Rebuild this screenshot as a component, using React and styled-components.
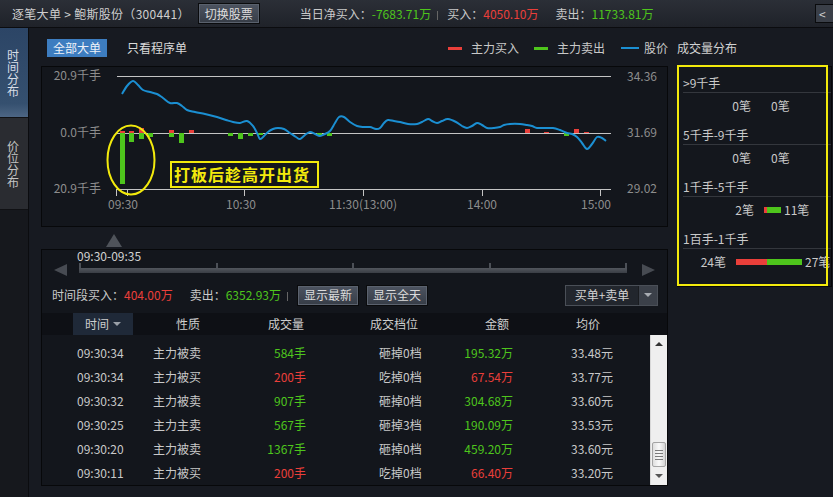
import React from 'react'
import styled, { createGlobalStyle } from 'styled-components'

const GREEN = '#4ec51c'
const RED = '#ea3f3a'
const BLUE = '#1b8fd2'
const YELLOW = '#f3ea0c'

const GlobalStyle = createGlobalStyle`
    html, body {
        margin: 0;
        padding: 0;
        background: #171a21;
    }
    body {
        font-family: "Noto Sans CJK SC", "Noto Sans", sans-serif;
        font-size: 12px;
        color: #c9c9c9;
    }
    * {
        box-sizing: border-box;
    }
`

const Frame = styled.div`
    width: 833px;
    height: 497px;
    display: flex;
    flex-direction: column;
    overflow: hidden;
    background: #171a21;
`

const TopBar = styled.div`
    height: 28px;
    flex-shrink: 0;
    display: flex;
    align-items: center;
    padding-left: 12px;
    background: linear-gradient(#2b2f37, #1f2229);
    border-bottom: 1px solid #0b0c0f;
    line-height: 16px;
    white-space: nowrap;
`

const Crumb = styled.span`
    color: #cfcfcf;
    letter-spacing: 0.3px;
`

const SwitchButton = styled.div`
    margin-left: 8px;
    height: 21px;
    padding: 0 6px;
    display: flex;
    align-items: center;
    color: #dedede;
    background: linear-gradient(#4d5461, #363c46);
    border: 1px solid #0a0b0d;
    box-shadow: inset 0 0 0 1px #5a616d;
`

const Stats = styled.div`
    margin-left: 40px;
    display: flex;
    align-items: center;
`

const Value = styled.span`
    color: ${p => (p.$tone === 'red' ? RED : GREEN)};
    margin-right: ${p => p.$gap || 0}px;
`

const Sep = styled.span`
    width: 1px;
    height: 9px;
    background: #666;
    margin: 3px 9px 0 6px;
`

const BackButton = styled.div`
    margin-left: auto;
    width: 18px;
    height: 19px;
    background: #3a3f48;
    border: 1px solid #0a0b0d;
    border-right: none;
    color: #cfcfcf;
    padding-left: 3px;
    line-height: 17px;
`

const Body = styled.div`
    flex: 1;
    display: flex;
`

const Sidebar = styled.div`
    width: 29px;
    flex-shrink: 0;
    display: flex;
    flex-direction: column;
    background: #16181d;
    border-right: 1px solid #0b0c0f;
`

const SideTab = styled.div`
    height: ${p => (p.$active ? 90 : 92)}px;
    display: flex;
    align-items: center;
    justify-content: center;
    padding-right: 3px;
    writing-mode: vertical-rl;
    text-orientation: upright;
    line-height: 12px;
    color: ${p => (p.$active ? '#d8dde6' : '#c4c4c4')};
    background: ${p => (p.$active
        ? 'linear-gradient(#2c4566, #35506f 85%, #4d6684)'
        : '#2a2c31')};
    border-bottom: 1px solid #101114;
`

const Main = styled.div`
    flex: 1;
    display: flex;
    align-items: flex-start;
    padding: 10px 0 0 12px;
`

const LeftColumn = styled.div`
    width: 627px;
    display: flex;
    flex-direction: column;
`

const FilterRow = styled.div`
    height: 20px;
    display: flex;
    align-items: center;
    padding-left: 6px;
    line-height: 16px;
`

const FilterTab = styled.div`
    height: 18px;
    display: flex;
    align-items: center;
    margin-right: 20px;
    color: ${p => (p.$active ? '#eef2f8' : '#dadada')};
    background: ${p => (p.$active ? '#3d7dc0' : 'transparent')};
    padding: ${p => (p.$active ? '0 6px' : '0')};
`

const Legend = styled.div`
    margin-left: auto;
    display: flex;
    align-items: center;
`

const LegendItem = styled.div`
    display: flex;
    align-items: center;
    margin-left: ${p => p.$gap}px;
`

const Swatch = styled.span`
    width: ${p => p.$w}px;
    height: ${p => p.$h}px;
    background: ${p => p.$color};
    margin-right: ${p => p.$mr}px;
`

const ChartPanel = styled.div`
    position: relative;
    margin-top: 8px;
    height: 161px;
    background: #13161c;
    border: 1px solid #07080a;
`

const Note = styled.div`
    position: absolute;
    left: 128px;
    top: 94px;
    width: 149px;
    height: 27px;
    border: 2px solid ${YELLOW};
    background: #13161c;
    color: ${YELLOW};
    font-size: 16px;
    font-weight: bold;
    line-height: 22px;
    padding-left: 2px;
    letter-spacing: 1px;
`

const MarkerRow = styled.div`
    height: 22px;
    padding-top: 7px;
    padding-left: 65px;
`

const Marker = styled.div`
    width: 0;
    height: 0;
    border-left: 8px solid transparent;
    border-right: 8px solid transparent;
    border-bottom: 13px solid #4f535a;
`

const LowerPanel = styled.div`
    height: 237px;
    background: #13161c;
    border: 1px solid #07080a;
    display: flex;
    flex-direction: column;
`

const RangeLabel = styled.div`
    height: 12px;
    line-height: 12px;
    padding-left: 35px;
    color: #d2d2d2;
`

const SliderRow = styled.div`
    height: 16px;
    display: flex;
    align-items: flex-start;
    padding-left: 12px;
`

const Arrow = styled.div`
    width: 0;
    height: 0;
    margin-top: 2px;
    border-top: 6px solid transparent;
    border-bottom: 6px solid transparent;
    ${p => (p.$dir === 'left'
        ? 'border-right: 13px solid #474b52;'
        : 'border-left: 13px solid #474b52; margin-left: 15px;')}
`

const Track = styled.div`
    margin: 1px 0 0 12px;
    width: 548px;
    display: flex;
    flex-direction: column;
`

const Ticks = styled.div`
    height: 5px;
    display: flex;
    justify-content: space-between;
`

const Tick = styled.span`
    width: 2px;
    height: 5px;
    background: #4c5057;
`

const Bar = styled.div`
    height: 5px;
    background: linear-gradient(#52565d, #3a3e45);
`

const StatsRow = styled.div`
    margin-top: 6px;
    height: 22px;
    display: flex;
    align-items: center;
    padding: 0 9px 0 10px;
    line-height: 16px;
`

const ToolButton = styled.div`
    height: 21px;
    padding: 0 6px;
    margin-right: 7px;
    display: flex;
    align-items: center;
    color: #dcdcdc;
    background: linear-gradient(#4d5461, #363c46);
    border: 1px solid #0a0b0d;
    box-shadow: inset 0 0 0 1px #5b626e;
`

const Select = styled.div`
    margin-left: auto;
    display: flex;
    height: 21px;
    border: 1px solid #4a4f57;
`

const SelectText = styled.div`
    width: 72px;
    display: flex;
    align-items: center;
    justify-content: center;
    background: #22262d;
    color: #d4d4d4;
`

const SelectArrow = styled.div`
    width: 19px;
    display: flex;
    align-items: center;
    justify-content: center;
    background: #3b4049;
    border-left: 1px solid #1a1c20;
    &::after {
        content: '';
        border-left: 4px solid transparent;
        border-right: 4px solid transparent;
        border-top: 4px solid #a8acb2;
    }
`

const HeaderRow = styled.div`
    margin-top: 7px;
    height: 22px;
    display: flex;
    background: #0e1015;
    padding-left: 31px;
    line-height: 22px;
`

const HeadCell = styled.div`
    width: ${p => p.$w}px;
    text-align: center;
    color: #cdcdcd;
    ${p => p.$active && `
        background: #1f2938;
        display: flex;
        justify-content: center;
        align-items: center;
        gap: 4px;
    `}
`

const SortCaret = styled.span`
    width: 0;
    height: 0;
    border-left: 4px solid transparent;
    border-right: 4px solid transparent;
    border-top: 4px solid #9aa0a8;
`

const TableBody = styled.div`
    flex: 1;
    display: flex;
`

const Rows = styled.div`
    flex: 1;
    padding-top: 6px;
`

const Row = styled.div`
    height: 24px;
    display: flex;
    align-items: center;
    line-height: 16px;
`

const Cell = styled.div`
    width: ${p => p.$w}px;
    padding-left: ${p => p.$pl || 0}px;
    text-align: ${p => p.$align || 'left'};
    color: ${p => (p.$tone === 'red' ? RED : p.$tone === 'green' ? GREEN : '#c9c9c9')};
    white-space: nowrap;
`

const Scrollbar = styled.div`
    width: 17px;
    display: flex;
    flex-direction: column;
    background: #efefef;
    border-left: 1px solid #d8d8d8;
`

const ScrollEnd = styled.div`
    height: ${p => p.$h}px;
    display: flex;
    align-items: center;
    justify-content: center;
    &::after {
        content: '';
        border-left: 4px solid transparent;
        border-right: 4px solid transparent;
        ${p => (p.$up ? 'border-bottom: 4px solid #333;' : 'border-top: 4px solid #555;')}
    }
`

const ScrollSpace = styled.div`
    flex: 1;
`

const Thumb = styled.div`
    height: 25px;
    margin: 0 1px;
    display: flex;
    flex-direction: column;
    justify-content: center;
    align-items: center;
    gap: 2px;
    background: linear-gradient(90deg, #dedede, #fafafa 50%, #d4d4d4);
    border: 1px solid #a4a4a4;
    border-radius: 2px;
`

const Grip = styled.span`
    width: 8px;
    height: 1px;
    background: #7a7a7a;
`

const RightColumn = styled.div`
    margin-left: 9px;
    width: 155px;
    display: flex;
    flex-direction: column;
`

const RightTitle = styled.div`
    height: 20px;
    line-height: 20px;
    color: #d2d2d2;
`

const DistPanel = styled.div`
    position: relative;
    margin-top: 8px;
    height: 221px;
    border: 1px solid #07080a;
    border-left: none;
    background: #14171d;
    padding: 6px 0 0 6px;
`

const Highlight = styled.div`
    position: absolute;
    top: -2px;
    left: 0;
    right: 3px;
    bottom: 0;
    border: 2px solid ${YELLOW};
    pointer-events: none;
`

const Group = styled.div`
    margin-bottom: 6px;
`

const GroupLabel = styled.div`
    height: 20px;
    line-height: 20px;
    border-bottom: 1px solid #34373d;
    color: #cacaca;
`

const Counts = styled.div`
    height: 26px;
    display: grid;
    grid-template-columns: 84px 1fr;
    align-items: center;
    line-height: 16px;
`

const CountSide = styled.div`
    display: flex;
    align-items: center;
    justify-content: ${p => (p.$left ? 'flex-end' : 'flex-start')};
    gap: ${p => (p.$left ? 10 : 3)}px;
    padding-right: ${p => (p.$left && p.$empty ? 16 : 0)}px;
    padding-left: ${p => (!p.$left && p.$empty ? 4 : 0)}px;
    white-space: nowrap;
`

const VolBar = styled.span`
    height: 6px;
    background: ${p => (p.$tone === 'red' ? RED : GREEN)};
`

const pricePts = [
    [122, 94], [127, 86], [133, 81], [138, 85], [143, 90], [150, 92], [157, 94], [163, 98],
    [170, 103], [177, 103], [182, 106], [187, 110], [195, 112], [205, 114], [217, 117],
    [226, 120], [233, 122], [240, 123], [247, 121], [253, 126], [257, 133], [260, 139],
    [264, 136], [268, 132], [273, 129], [278, 128], [284, 129], [290, 133], [296, 137],
    [300, 139], [305, 135], [310, 132], [315, 134], [320, 136], [325, 134], [330, 131],
    [335, 123], [339, 117], [344, 117], [350, 122], [357, 126], [364, 127], [370, 127],
    [376, 129], [380, 128], [384, 123], [388, 120], [394, 121], [400, 122], [408, 124],
    [417, 124], [422, 122], [428, 119], [432, 121], [437, 123], [442, 121], [448, 119],
    [456, 122], [462, 126], [467, 128], [472, 126], [477, 123], [482, 125], [487, 128],
    [494, 128], [500, 127], [504, 125], [510, 124], [520, 124], [527, 125], [532, 126],
    [537, 128], [545, 128], [553, 128], [560, 130], [567, 133], [572, 134], [577, 137],
    [582, 143], [587, 149], [592, 144], [597, 137], [602, 138], [606, 141],
]

const buyBars = [
    [120, 131], [129, 131], [139, 128], [169, 130], [189, 130],
    [525, 129], [544, 132], [574, 129], [584, 132],
]

const sellBars = [
    [120, 184], [129, 142], [139, 139], [148, 137], [169, 137], [179, 143],
    [228, 136], [238, 139], [248, 136], [258, 135], [317, 136], [327, 136], [564, 136],
]

function smoothPath(pts) {
    let d = `M${pts[0][0]},${pts[0][1]}`
    for (let i = 0; i < pts.length - 1; i++) {
        const p0 = pts[i - 1] || pts[i]
        const p1 = pts[i]
        const p2 = pts[i + 1]
        const p3 = pts[i + 2] || p2
        const c1x = p1[0] + (p2[0] - p0[0]) / 6
        const c1y = p1[1] + (p2[1] - p0[1]) / 6
        const c2x = p2[0] - (p3[0] - p1[0]) / 6
        const c2y = p2[1] - (p3[1] - p1[1]) / 6
        d += ` C${c1x.toFixed(1)},${c1y.toFixed(1)} ${c2x.toFixed(1)},${c2y.toFixed(1)} ${p2[0]},${p2[1]}`
    }
    return d
}

const axisText = {
    fontFamily: '"Noto Sans CJK SC", "Noto Sans", sans-serif',
    fontSize: 12,
    fill: '#8d8d8d',
}

function Chart() {
    const ticks = [116, 127, 244, 363, 482, 600]
    const times = [[123, '09:30'], [241, '10:30'], [363, '11:30(13:00)'], [482, '14:00'], [596, '15:00']]
    return (
        <svg width="625" height="159" viewBox="42 67 625 159" style={{ display: 'block' }}>
            <g stroke="#c4c4c4" strokeWidth="1">
                <line x1="117" y1="76.5" x2="611" y2="76.5" />
                <line x1="117" y1="133.5" x2="611" y2="133.5" />
                <line x1="117" y1="189.5" x2="611" y2="189.5" />
                {ticks.map(x => (
                    <line key={x} x1={x + 0.5} y1="189" x2={x + 0.5} y2="196" />
                ))}
            </g>
            <g style={axisText}>
                <text x="101" y="80" textAnchor="end">20.9千手</text>
                <text x="101" y="137" textAnchor="end">0.0千手</text>
                <text x="101" y="193" textAnchor="end">20.9千手</text>
                <text x="627" y="81">34.36</text>
                <text x="627" y="137">31.69</text>
                <text x="627" y="193">29.02</text>
                {times.map(([x, t]) => (
                    <text key={t} x={x} y="209" textAnchor="middle">{t}</text>
                ))}
            </g>
            {sellBars.map(([x, y]) => (
                <rect key={'s' + x} x={x} y="133" width="5" height={y - 133} fill={GREEN} />
            ))}
            {buyBars.map(([x, y]) => (
                <rect key={'b' + x} x={x} y={y} width="5" height={133 - y} fill={RED} />
            ))}
            <path d={smoothPath(pricePts)} fill="none" stroke={BLUE} strokeWidth="2" strokeLinejoin="round" />
            <ellipse cx="131" cy="160" rx="23.5" ry="34.5" fill="none" stroke={YELLOW} strokeWidth="2" />
        </svg>
    )
}

const trades = [
    ['09:30:34', '主力被卖', '584手', 'green', '砸掉0档', '195.32万', '33.48元'],
    ['09:30:34', '主力被买', '200手', 'red', '吃掉0档', '67.54万', '33.77元'],
    ['09:30:32', '主力被卖', '907手', 'green', '砸掉0档', '304.68万', '33.60元'],
    ['09:30:25', '主力主卖', '567手', 'green', '砸掉3档', '190.09万', '33.53元'],
    ['09:30:20', '主力被卖', '1367手', 'green', '砸掉0档', '459.20万', '33.60元'],
    ['09:30:11', '主力被买', '200手', 'red', '吃掉0档', '66.40万', '33.20元'],
]

const distribution = [
    { label: '>9千手', buy: 0, sell: 0, red: 0, green: 0 },
    { label: '5千手-9千手', buy: 0, sell: 0, red: 0, green: 0 },
    { label: '1千手-5千手', buy: 2, sell: 11, red: 3, green: 14 },
    { label: '1百手-1千手', buy: 24, sell: 27, red: 31, green: 35 },
]

export default function App() {
    return (
        <Frame>
            <GlobalStyle />
            <TopBar>
                <Crumb>逐笔大单 &gt; 鲍斯股份（300441）</Crumb>
                <SwitchButton>切换股票</SwitchButton>
                <Stats>
                    <span>当日净买入：</span>
                    <Value $tone="green">-7683.71万</Value>
                    <Sep />
                    <span>买入：</span>
                    <Value $tone="red" $gap={17}>4050.10万</Value>
                    <span>卖出：</span>
                    <Value $tone="green">11733.81万</Value>
                </Stats>
                <BackButton>&lt;</BackButton>
            </TopBar>
            <Body>
                <Sidebar>
                    <SideTab $active>时间分布</SideTab>
                    <SideTab>价位分布</SideTab>
                </Sidebar>
                <Main>
                    <LeftColumn>
                        <FilterRow>
                            <FilterTab $active>全部大单</FilterTab>
                            <FilterTab>只看程序单</FilterTab>
                            <Legend>
                                <LegendItem $gap={0}>
                                    <Swatch $w={14} $h={3} $color={RED} $mr={9} />主力买入
                                </LegendItem>
                                <LegendItem $gap={15}>
                                    <Swatch $w={14} $h={3} $color={GREEN} $mr={9} />主力卖出
                                </LegendItem>
                                <LegendItem $gap={16}>
                                    <Swatch $w={18} $h={2} $color={BLUE} $mr={5} />股价
                                </LegendItem>
                            </Legend>
                        </FilterRow>
                        <ChartPanel>
                            <Chart />
                            <Note>打板后趁高开出货</Note>
                        </ChartPanel>
                        <MarkerRow>
                            <Marker />
                        </MarkerRow>
                        <LowerPanel>
                            <RangeLabel>09:30-09:35</RangeLabel>
                            <SliderRow>
                                <Arrow $dir="left" />
                                <Track>
                                    <Ticks>
                                        <Tick /><Tick /><Tick /><Tick /><Tick />
                                    </Ticks>
                                    <Bar />
                                </Track>
                                <Arrow $dir="right" />
                            </SliderRow>
                            <StatsRow>
                                <span>时间段买入：</span>
                                <Value $tone="red" $gap={17}>404.00万</Value>
                                <span>卖出：</span>
                                <Value $tone="green">6352.93万</Value>
                                <Sep />
                                <ToolButton>显示最新</ToolButton>
                                <ToolButton>显示全天</ToolButton>
                                <Select>
                                    <SelectText>买单+卖单</SelectText>
                                    <SelectArrow />
                                </Select>
                            </StatsRow>
                            <HeaderRow>
                                <HeadCell $w={60} $active>时间<SortCaret /></HeadCell>
                                <HeadCell $w={110}>性质</HeadCell>
                                <HeadCell $w={86}>成交量</HeadCell>
                                <HeadCell $w={130}>成交档位</HeadCell>
                                <HeadCell $w={76}>金额</HeadCell>
                                <HeadCell $w={106}>均价</HeadCell>
                            </HeaderRow>
                            <TableBody>
                                <Rows>
                                    {trades.map((t, i) => (
                                        <Row key={i}>
                                            <Cell $w={111} $pl={35}>{t[0]}</Cell>
                                            <Cell $w={100}>{t[1]}</Cell>
                                            <Cell $w={53} $align="right" $tone={t[3]}>{t[2]}</Cell>
                                            <Cell $w={134} $pl={73}>{t[4]}</Cell>
                                            <Cell $w={73} $align="right" $tone={t[3]}>{t[5]}</Cell>
                                            <Cell $w={100} $align="right">{t[6]}</Cell>
                                        </Row>
                                    ))}
                                </Rows>
                                <Scrollbar>
                                    <ScrollEnd $h={18} $up />
                                    <ScrollSpace />
                                    <Thumb>
                                        <Grip /><Grip /><Grip /><Grip />
                                    </Thumb>
                                    <ScrollEnd $h={18} />
                                </Scrollbar>
                            </TableBody>
                        </LowerPanel>
                    </LeftColumn>
                    <RightColumn>
                        <RightTitle>成交量分布</RightTitle>
                        <DistPanel>
                            {distribution.map(d => {
                                const empty = !d.red && !d.green
                                return (
                                    <Group key={d.label}>
                                        <GroupLabel>{d.label}</GroupLabel>
                                        <Counts>
                                            <CountSide $left $empty={empty}>
                                                {d.buy}笔
                                                {d.red > 0 && <VolBar $tone="red" style={{ width: d.red }} />}
                                            </CountSide>
                                            <CountSide $empty={empty}>
                                                {d.green > 0 && <VolBar $tone="green" style={{ width: d.green }} />}
                                                {d.sell}笔
                                            </CountSide>
                                        </Counts>
                                    </Group>
                                )
                            })}
                            <Highlight />
                        </DistPanel>
                    </RightColumn>
                </Main>
            </Body>
        </Frame>
    )
}
